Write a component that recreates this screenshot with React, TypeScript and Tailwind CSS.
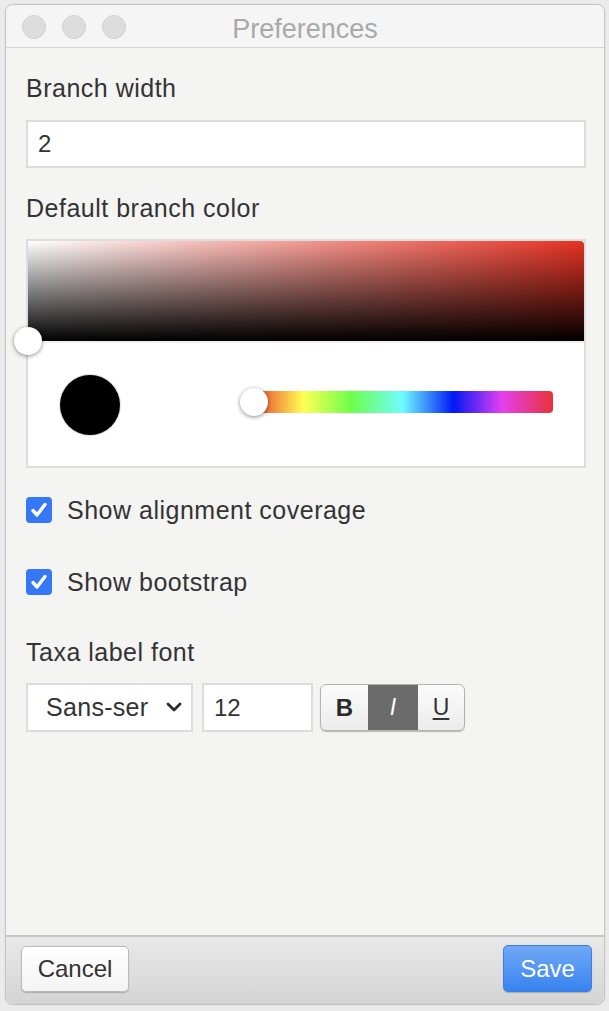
import React from "react";

const font = "font-['Liberation_Sans',Arial,Helvetica,sans-serif]";

function Check() {
  return (
    <div className="w-[26px] h-[26px] rounded-[4px] bg-[#3478f6] flex items-center justify-center shrink-0">
      <svg width="26" height="26" viewBox="0 0 26 26">
        <path d="M7 13.5 L11 18 L19 7.5" fill="none" stroke="#fff" strokeWidth="3.4" strokeLinecap="round" strokeLinejoin="round" />
      </svg>
    </div>
  );
}

export default function App() {
  return (
    <div className={`h-[1011px] bg-[#ebebeb] pt-[4px] pl-[5px] pr-[4px] pb-[6px] ${font}`}>
      <div className="h-[1001px] flex flex-col border border-[#c4c4c4] rounded-[8px] overflow-hidden bg-[#f4f4f3] shadow-[0_0_2px_rgba(0,0,0,0.08)]">
        {/* Title bar */}
        <div className="h-[43px] shrink-0 border-b border-[#d6d6d6] bg-[#f5f5f5] grid grid-cols-[1fr_auto_1fr] items-center">
          <div className="flex items-center gap-[16px] pl-[16px] pt-[1px]">
            <div className="w-[24px] h-[24px] rounded-full bg-[#dddddd] border border-[#d2d2d2]" />
            <div className="w-[24px] h-[24px] rounded-full bg-[#dddddd] border border-[#d2d2d2]" />
            <div className="w-[24px] h-[24px] rounded-full bg-[#dddddd] border border-[#d2d2d2]" />
          </div>
          <div className="pt-[5px] text-[27px] leading-[30px] text-[#a9a9a9]">Preferences</div>
          <div />
        </div>

        {/* Content */}
        <div className="flex-1 pl-[20px] pr-[18px] text-[#333333]">
          <div className="mt-[25px] text-[25px] leading-[30px] tracking-[0.5px]">Branch width</div>
          <div className="mt-[17px] h-[48px] border-2 border-[#dcdcdc] bg-white px-[10px] flex items-center text-[24px]">2</div>

          <div className="mt-[25px] text-[25px] leading-[30px] tracking-[0.5px]">Default branch color</div>
          <div className="mt-[16px] border-2 border-[#dddddd] bg-white">
            <div className="relative h-[100px] rounded-tr-[4px] bg-[#e63223]">
              <div className="absolute inset-0 rounded-tr-[4px] bg-[linear-gradient(to_right,#ffffff,rgba(255,255,255,0))]" />
              <div className="absolute inset-0 rounded-tr-[4px] bg-[linear-gradient(to_top,#000000,rgba(0,0,0,0))]" />
              <div className="absolute left-[-14px] bottom-[-14px] w-[28px] h-[28px] rounded-full bg-white shadow-[0_1px_4px_rgba(0,0,0,0.45)] z-10" />
            </div>
            <div className="h-[125px] border-t-2 border-[#f1f1f1] flex items-center">
              <div className="ml-[32px] w-[60px] h-[60px] rounded-full bg-black shadow-[0_0_0_1px_rgba(0,0,0,0.08),0_0_2px_rgba(0,0,0,0.2)] shrink-0" />
              <div className="relative ml-[132px] mr-[31px] mb-[6px] flex-1 h-[22px] rounded-[4px] bg-[linear-gradient(to_right,#ea3a2a_0%,#ffff55_17%,#6cff4a_33%,#6ffcff_50%,#0018f5_67%,#e53ff0_83%,#e83238_100%)]">
                <div className="absolute left-[-12px] top-[-3px] w-[28px] h-[28px] rounded-full bg-white shadow-[0_1px_4px_rgba(0,0,0,0.45)]" />
              </div>
            </div>
          </div>

          <div className="mt-[29px] flex items-center gap-[15px] h-[26px]">
            <Check />
            <span className="text-[25px] leading-[30px] tracking-[0.5px]">Show alignment coverage</span>
          </div>
          <div className="mt-[46px] flex items-center gap-[15px] h-[26px]">
            <Check />
            <span className="text-[25px] leading-[30px] tracking-[0.5px]">Show bootstrap</span>
          </div>

          <div className="mt-[42px] text-[25px] leading-[30px] tracking-[0.5px]">Taxa label font</div>
          <div className="mt-[16px] flex items-center h-[49px]">
            <div className="w-[167px] h-[49px] border-2 border-[#dcdcdc] bg-white flex items-center justify-between pl-[18px] pr-[9px]">
              <span className="text-[25px] tracking-[0.3px]">Sans-ser</span>
              <svg width="16" height="11" viewBox="0 0 16 11">
                <path d="M2 2 L8 8 L14 2" fill="none" stroke="#2a2a2a" strokeWidth="2.8" strokeLinecap="round" strokeLinejoin="round" />
              </svg>
            </div>
            <div className="ml-[9px] w-[111px] h-[49px] border-2 border-[#dcdcdc] bg-white flex items-center px-[10px] text-[24px]">12</div>
            <div className="ml-[7px] w-[145px] h-[47px] rounded-[6px] border border-[#b3b3b3] bg-[linear-gradient(to_bottom,#fbfbfb,#ececec)] shadow-[0_1px_1px_rgba(0,0,0,0.25)] flex overflow-hidden">
              <div className="w-[47px] flex items-center justify-center text-[24px] font-bold text-[#2a2a2a]">B</div>
              <div className="w-[50px] bg-[#6b6b6b] flex items-center justify-center text-[23px] italic text-white">I</div>
              <div className="flex-1 flex items-center justify-center text-[23px] underline underline-offset-[3px] text-[#333]">U</div>
            </div>
          </div>
        </div>

        {/* Footer */}
        <div className="h-[69px] shrink-0 border-t-2 border-[#c6c6c6] bg-[linear-gradient(to_bottom,#e9e9e9,#d4d4d4)] flex items-center justify-between pl-[15px] pr-[12px] pb-[4px]">
          <button className="w-[108px] h-[46px] rounded-[5px] border border-[#bababa] bg-[linear-gradient(to_bottom,#ffffff,#f4f4f4)] shadow-[0_1px_1px_rgba(0,0,0,0.2)] text-[24px] text-[#333]">Cancel</button>
          <button className="w-[89px] h-[47px] rounded-[5px] border border-[#3b7fe4] bg-[linear-gradient(to_bottom,#70a9f7,#3883ef)] shadow-[0_1px_1px_rgba(0,0,0,0.2)] text-[24px] text-white">Save</button>
        </div>
      </div>
    </div>
  );
}
